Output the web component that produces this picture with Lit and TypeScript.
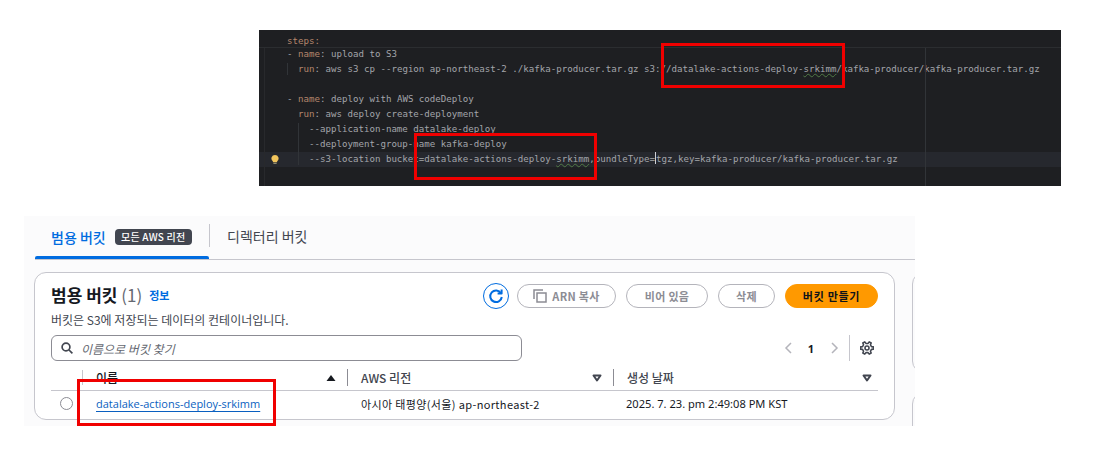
import { LitElement, html, svg, css } from "lit";
import { customElement } from "lit/decorators.js";

const sort = (up: boolean) => html`<svg class="sort" width="10" height="8" viewBox="0 0 10 8">
  ${up
    ? svg`<path d="M5 1 9.500 7H.5Z" fill="#16191f"/>`
    : svg`<path d="M1.500 1.500H8.500L5 6.500Z" fill="none" stroke="#424650" stroke-width="2" stroke-linejoin="round"/>`}
</svg>`;

function cogPath(): string {
  const pts: string[] = [];
  const teeth = 6;
  for (let i = 0; i < teeth; i++) {
    const a = (i * 2 * Math.PI) / teeth;
    const step = (2 * Math.PI) / teeth;
    const seq: [number, number][] = [
      [5.2, a - step * 0.5],
      [5.4, a - step * 0.28],
      [7.4, a - step * 0.17],
      [7.4, a + step * 0.17],
      [5.4, a + step * 0.28],
    ];
    for (const [r, t] of seq) {
      pts.push(`${(8 + r * Math.cos(t)).toFixed(2)} ${(8 + r * Math.sin(t)).toFixed(2)}`);
    }
  }
  return `M${pts.join("L")}Z`;
}

@customElement("app-root")
export class AppRoot extends LitElement {
  static styles = css`
    :host { display: block; width: 1099px; height: 457px; background: #fff; position: relative; overflow: hidden; font-family: "Noto Sans CJK KR", "Noto Sans", sans-serif; }
    .editor { position: relative; margin: 30px 0 0 259px; width: 802px; height: 156px; background: #1e1f22; font: 9.13px/15px "DejaVu Sans Mono", monospace; color: #a3a5aa; overflow: hidden; }
    .sticky { height: 18px; padding-left: 28px; line-height: 22px; border-bottom: 1px solid #2b2d30; box-sizing: border-box; }
    .code { padding: 0 0 0 28px; margin-top: -1px; }
    .ln { height: 15px; white-space: pre; }
    .ln.cur { background: #26282e; margin-left: -28px; padding-left: 28px; }
    .k { color: #b5866c; }
    .u { text-decoration: underline wavy #4f7a45 1px; text-underline-offset: 1px; }
    .caret { display: inline-block; width: 0; height: 12px; border-left: 1px solid #ced0d6; vertical-align: -2px; }
    .g { position: absolute; width: 1px; background: #313438; }
    .g0 { left: 5px; top: 18px; bottom: 0; background: #28292c; }
    .g1 { left: 28px; top: 33px; height: 12px; }
    .g2 { left: 39px; top: 93px; height: 42px; }
    .g3 { left: 666px; top: 18px; bottom: 0; }
    .bulb { position: absolute; left: 12px; top: 124px; }
    .red { position: absolute; border: 3px solid #f00000; box-sizing: border-box; }
    .r1 { left: 402px; top: 13px; width: 184px; height: 45px; }
    .r2 { left: 155px; top: 103px; width: 183px; height: 47px; }
    .r3 { left: 77px; top: 379px; width: 199px; height: 47px; }

    .aws { position: relative; margin: 30px 0 0 24px; width: 891px; height: 210px; background: #fbfbfc; overflow: hidden; }
    .tabs { display: flex; align-items: center; margin: 0 0 0 11px; height: 43px; border-bottom: 1px solid #c6c6cd; font-size: 14px; color: #424650; }
    .tab { position: relative; display: flex; align-items: center; gap: 9px; width: 174px; height: 100%; padding: 0 0 2px 16px; box-sizing: border-box; color: #006ce0; font-weight: 500; }
    .tab::after { content: ""; position: absolute; left: 0; right: 0; bottom: 0; height: 3px; background: #006ce0; border-radius: 2px 2px 0 0; }
    .badge { background: #424650; color: #fff; font-size: 10px; font-weight: 500; line-height: 16px; height: 16px; width: 77px; text-align: center; letter-spacing: .2px; border-radius: 4px; white-space: nowrap; }
    .sep { width: 1px; height: 23px; background: #c6c6cd; margin: -4px 0 0 0; }
    .tab2 { margin: -4px 0 0 17px; }
    .card { position: relative; margin: 12px 0 0 10px; width: 861px; height: 148px; border: 1px solid #c6c6cd; border-radius: 12px; box-sizing: border-box; background: #fff; padding: 10px 16px 0; }
    .head { display: flex; align-items: center; height: 24px; }
    h2 { margin: 0; font-size: 17px; line-height: 24px; font-weight: 700; color: #16191f; }
    h2 span { font-weight: 400; color: #656871; }
    .info { margin-left: 7px; font-size: 11px; font-weight: 700; color: #006ce0; }
    .acts { margin-left: auto; margin-top: 2px; display: flex; align-items: center; gap: 10px; }
    .refresh { width: 26px; height: 26px; border: 1.5px solid #006ce0; border-radius: 50%; box-sizing: border-box; display: flex; align-items: center; justify-content: center; margin-right: -2px; }
    .btn { height: 24px; border: 1.5px solid #b4b4bb; border-radius: 12px; box-sizing: border-box; display: flex; align-items: center; justify-content: center; gap: 5px; font-size: 11px; font-weight: 700; color: #8c8c94; letter-spacing: .3px; }
    .b1 { width: 99px; } .b2 { width: 82px; } .b3 { width: 57px; }
    .primary { width: 93px; background: #ff9900; border-color: #ff9900; color: #0f141a; letter-spacing: .7px; }
    .desc { margin: 5px 0 0; font-size: 12px; line-height: 16px; color: #424650; white-space: nowrap; }
    .tools { display: flex; align-items: center; margin-top: 7px; height: 26px; }
    .search { width: 471px; height: 26px; border: 1px solid #8c8c94; border-radius: 6px; box-sizing: border-box; display: flex; align-items: center; gap: 8px; padding-left: 9px; background: #fff; font-size: 12px; font-style: italic; color: #656871; }
    .pager { margin-left: auto; display: flex; align-items: center; height: 26px; margin-right: 4px; }
    .num { font-size: 11px; font-weight: 700; color: #16191f; margin: 0 16px 0 15px; font-family: "Noto Sans", sans-serif; }
    .psep { width: 1px; height: 26px; background: #c6c6cd; margin: 0 10px 0 10px; }
    .thead, .row { display: grid; grid-template-columns: 296px 266px 1fr; }
    .thead { margin-top: 4px; width: 827px; height: 26px; border-bottom: 1px solid #c6c6cd; box-sizing: border-box; font-size: 12px; font-weight: 500; color: #424650; align-items: center; }
    .th { display: flex; align-items: center; height: 17px; position: relative; }
    .th.n { padding-left: 45px; color: #16191f; }
    .th.n::before { content: ""; position: absolute; left: 31px; width: 1px; height: 15px; background: #c6c6cd; }
    .th .sort { margin-left: auto; margin-right: 11px; }
    .th.last .sort { margin-right: 6px; }
    .th.x { border-left: 1px solid #8c8c94; padding-left: 13px; }
    .row { font-size: 11px; color: #16191f; height: 25px; align-items: center; }
    .cell { display: flex; align-items: center; white-space: nowrap; }
    .radio { width: 13px; height: 13px; border: 1px solid #8c8c94; border-radius: 50%; box-sizing: border-box; margin: 0 23px 0 9px; background: #fff; }
    a { color: #0a5fc0; text-decoration: underline; text-underline-offset: 3px; font-family: "Open Sans", sans-serif; font-size: 11px; white-space: nowrap; }
    .c2 { padding-left: 14px; letter-spacing: .36px; }
    .c3 { padding-left: 13px; font-family: "Noto Sans", sans-serif; font-size: 11.1px; }
    .side { position: absolute; left: 888px; width: 40px; border: 1px solid #c6c6cd; border-radius: 12px; box-sizing: border-box; background: #fbfbfc; }
    .s1 { top: 56px; height: 101px; }
    .s2 { top: 176px; height: 60px; }
  `;

  render() {
    return html`
      <div class="editor">
        <div class="sticky"><span class="k">steps:</span></div>
        <div class="code">
          <div class="ln">- <span class="k">name</span>: upload to S3</div>
          <div class="ln">  <span class="k">run</span>: aws s3 cp --region ap-northeast-2 ./kafka-producer.tar.gz s3://datalake-actions-deploy-<span class="u">srkimm</span>/kafka-producer/kafka-producer.tar.gz</div>
          <div class="ln"> </div>
          <div class="ln">- <span class="k">name</span>: deploy with AWS codeDeploy</div>
          <div class="ln">  <span class="k">run</span>: aws deploy create-deployment</div>
          <div class="ln">    --application-name datalake-deploy</div>
          <div class="ln">    --deployment-group-name kafka-deploy</div>
          <div class="ln cur">    --s3-location bucket=datalake-actions-deploy-<span class="u">srkimm</span>,bundleType=<span class="caret"></span>tgz,key=kafka-producer/kafka-producer.tar.gz</div>
        </div>
        <i class="g g0"></i><i class="g g1"></i><i class="g g2"></i><i class="g g3"></i>
        <svg class="bulb" width="8" height="11" viewBox="0 0 9 11">
          <path d="M4.500.3a4 4 0 0 0-2.400 7.200V8.600h4.800V7.500A4 4 0 0 0 4.500.3Z" fill="#f2c55c"/>
          <rect x="2.600" y="9.200" width="3.800" height="1.500" rx=".7" fill="#8f8a70"/>
        </svg>
        <div class="red r1"></div>
        <div class="red r2"></div>
      </div>

      <div class="aws">
        <div class="tabs">
          <div class="tab">범용 버킷 <span class="badge">모든 AWS 리전</span></div>
          <div class="sep"></div>
          <div class="tab2">디렉터리 버킷</div>
        </div>
        <div class="card">
          <div class="head">
            <h2>범용 버킷 <span>(1)</span></h2>
            <span class="info">정보</span>
            <div class="acts">
              <div class="refresh">
                <svg width="16" height="16" viewBox="0 0 16 16" fill="none" stroke="#006ce0" stroke-width="2">
                  <path d="M13 5.200A5.800 5.800 0 1 0 13.800 9"/><path d="M13.600 1.600v4h-4" stroke-linejoin="round"/>
                </svg>
              </div>
              <div class="btn b1">
                <svg width="14" height="14" viewBox="0 0 14 14" fill="none" stroke="#8c8c94" stroke-width="1.5">
                  <path d="M1 10V1h9"/><rect x="4" y="4" width="9" height="9"/>
                </svg>
                ARN 복사
              </div>
              <div class="btn b2">비어 있음</div>
              <div class="btn b3">삭제</div>
              <div class="btn primary">버킷 만들기</div>
            </div>
          </div>
          <p class="desc">버킷은 S3에 저장되는 데이터의 컨테이너입니다.</p>
          <div class="tools">
            <div class="search">
              <svg width="12" height="12" viewBox="0 0 12 12" fill="none" stroke="#424650" stroke-width="1.7">
                <circle cx="5" cy="5" r="3.900"/><path d="m8 8 3.400 3.400"/>
              </svg>
              이름으로 버킷 찾기
            </div>
            <div class="pager">
              <svg width="9" height="12" viewBox="0 0 9 12" fill="none" stroke="#b4b4bb" stroke-width="1.5"><path d="M7 1 2 6l5 5"/></svg>
              <span class="num">1</span>
              <svg width="9" height="12" viewBox="0 0 9 12" fill="none" stroke="#b4b4bb" stroke-width="1.5"><path d="m2 1 5 5-5 5"/></svg>
              <span class="psep"></span>
              <svg width="14" height="14" viewBox="0 0 16 16" fill="none" stroke="#424650" stroke-width="1.8" stroke-linejoin="round">
                <circle cx="8" cy="8" r="2.300"/>
                <path d=${cogPath()}/>
              </svg>
            </div>
          </div>
          <div class="thead">
            <div class="th n">이름${sort(true)}</div>
            <div class="th x">AWS 리전${sort(false)}</div>
            <div class="th x last">생성 날짜${sort(false)}</div>
          </div>
          <div class="row">
            <div class="cell"><span class="radio"></span><a>datalake-actions-deploy-srkimm</a></div>
            <div class="cell c2">아시아 태평양(서울) ap-northeast-2</div>
            <div class="cell c3">2025. 7. 23. pm 2:49:08 PM KST</div>
          </div>
        </div>
        <div class="side s1"></div>
        <div class="side s2"></div>
      </div>
      <div class="red r3"></div>
    `;
  }
}
